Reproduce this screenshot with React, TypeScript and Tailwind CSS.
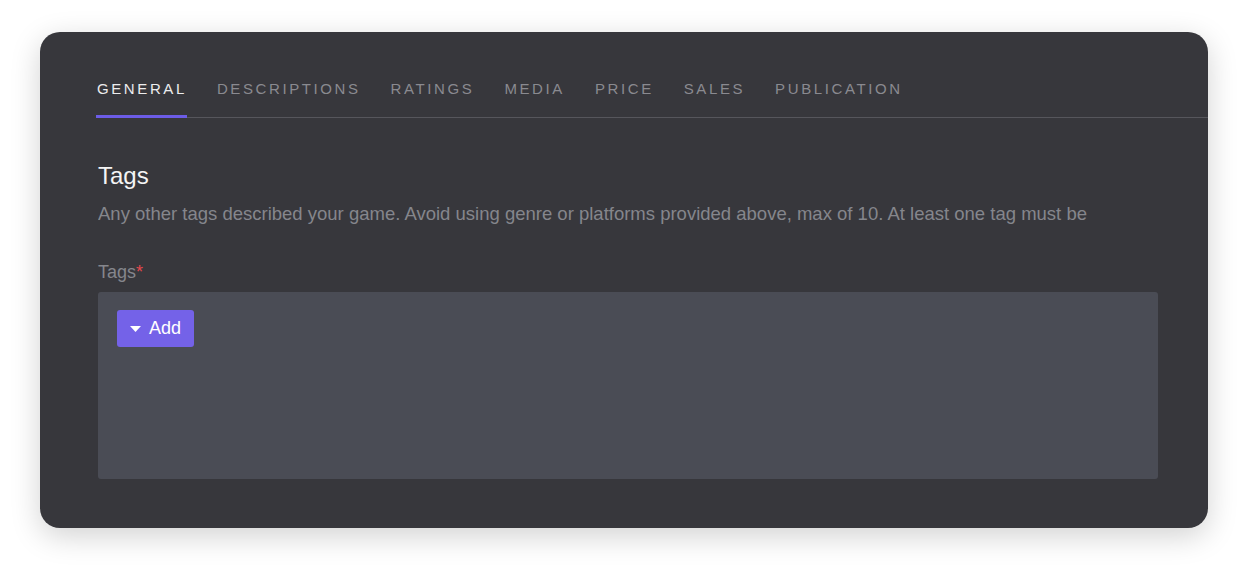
import React from "react";

const tabs = ["GENERAL", "DESCRIPTIONS", "RATINGS", "MEDIA", "PRICE", "SALES", "PUBLICATION"];

export default function App() {
  return (
    <div
      className="min-h-[576px] w-full bg-white px-[40px] pt-[32px] pb-[48px]"
      style={{ fontFamily: '"Liberation Sans", Arial, sans-serif' }}
    >
      <div className="h-[496px] rounded-[20px] bg-[#37373c] shadow-[0_8px_30px_rgba(0,0,0,0.18)] flex flex-col">
        <div className="ml-[56px] flex gap-[30px] border-b border-[#56565c] pt-[47px]">
          {tabs.map((t, i) => (
            <div
              key={t}
              className={
                i === 0
                  ? "pl-[1px] pb-[16px] border-b-[3px] border-[#6c5ce7] text-[15px] leading-[20px] tracking-[2.6px] text-[#ececee] mb-[-1px]"
                  : "pb-[16px] border-b-[3px] border-transparent text-[15px] leading-[20px] tracking-[2.6px] text-[#8a8a90] mb-[-1px]"
              }
            >
              {t}
            </div>
          ))}
        </div>
        <div className="pl-[58px] pr-[50px] pt-[42px] flex flex-col">
          <div className="text-[24px] leading-[32px] text-[#f4f4f5]">Tags</div>
          <div className="mt-[8px] text-[18.5px] leading-[28px] text-[#85868c] whitespace-nowrap overflow-hidden">
            Any other tags described your game. Avoid using genre or platforms provided above, max of 10. At least one tag must be
          </div>
          <div className="mt-[32px] text-[18px] leading-[24px] text-[#85868c]">
            Tags<span className="text-[#e5484d]">*</span>
          </div>
          <div className="mt-[8px] h-[187px] rounded-[3px] bg-[#4a4c55] pt-[18px] pl-[19px]">
            <button className="flex h-[37px] items-center rounded-[3px] bg-[#7462e8] pl-[13px] pr-[13px] text-[18px] text-white">
              <svg width="11" height="6" viewBox="0 0 11 6" className="mr-[8px]">
                <path d="M0 0 L11 0 L5.5 6 Z" fill="white" />
              </svg>
              Add
            </button>
          </div>
        </div>
      </div>
    </div>
  );
}
